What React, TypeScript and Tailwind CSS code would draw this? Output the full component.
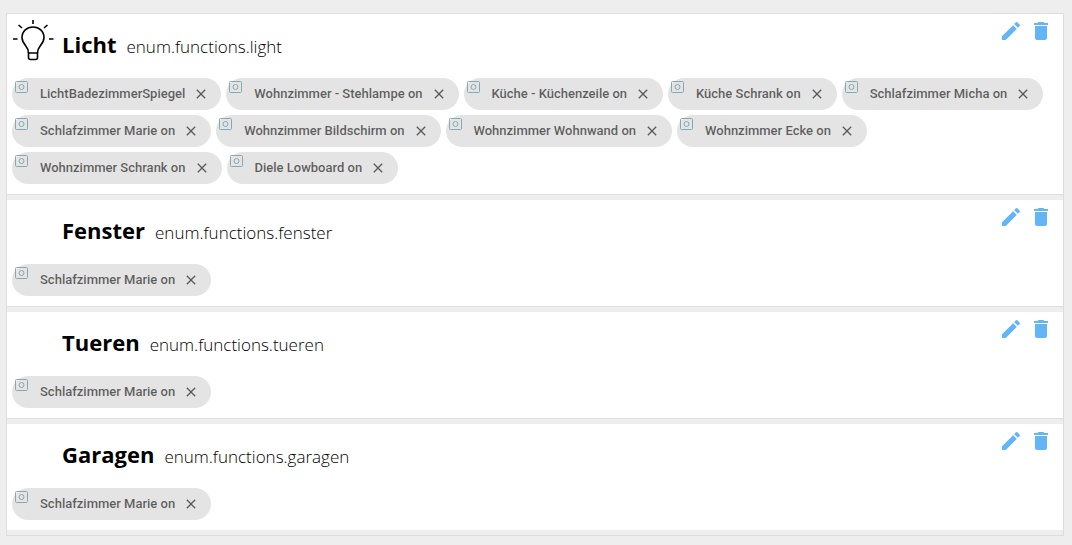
import { useState } from 'react';
import { MdClose, MdDelete, MdEdit } from 'react-icons/md';

interface EnumFunction {
  id: string;
  name: string;
  icon?: boolean;
  members: string[];
}

const initialFunctions: EnumFunction[] = [
  {
    id: 'enum.functions.light',
    name: 'Licht',
    icon: true,
    members: [
      'LichtBadezimmerSpiegel',
      'Wohnzimmer - Stehlampe on',
      'Küche - Küchenzeile on',
      'Küche Schrank on',
      'Schlafzimmer Micha on',
      'Schlafzimmer Marie on',
      'Wohnzimmer Bildschirm on',
      'Wohnzimmer Wohnwand on',
      'Wohnzimmer Ecke on',
      'Wohnzimmer Schrank on',
      'Diele Lowboard on',
    ],
  },
  { id: 'enum.functions.fenster', name: 'Fenster', members: ['Schlafzimmer Marie on'] },
  { id: 'enum.functions.tueren', name: 'Tueren', members: ['Schlafzimmer Marie on'] },
  { id: 'enum.functions.garagen', name: 'Garagen', members: ['Schlafzimmer Marie on'] },
];

function BulbIcon() {
  return (
    <svg className="w-[42px] h-[42px]" viewBox="0 0 42 42" fill="none" stroke="#000" strokeWidth={1.6} aria-hidden="true">
      <path d="M16.500 34c0-3-1-5-3-7.500-2-2.500-3.500-4.500-3.500-8C10 12 15 8 21 8s11 4 11 10.500c0 3.500-1.500 5.500-3.500 8-2 2.500-3 4.500-3 7.500" />
      <path d="M16.500 34h9v4.500q0 2-2 2h-5q-2 0-2-2z" />
      <path d="M21 1v4M1 20h4.500M37 20h4.500M6.500 6l3.500 3M35.500 6L32 9" />
    </svg>
  );
}

function StateIcon() {
  return (
    <svg className="absolute left-[3px] top-[3px] w-[13px] h-[12px]" viewBox="0 0 13 12" fill="none" stroke="#84a9b4" aria-hidden="true">
      <rect x="0.5" y="0.5" width="12" height="11" rx="1" />
      <circle cx="6.500" cy="6" r="2.500" />
    </svg>
  );
}

interface ChipProps {
  label: string;
  onRemove: () => void;
}

function Chip({ label, onRemove }: ChipProps) {
  return (
    <li className="relative flex items-center h-8 pl-7 pr-3 rounded-full bg-[#e4e4e4] font-['Roboto',sans-serif] text-[13px] font-medium text-black/60 whitespace-nowrap">
      <StateIcon />
      <span>{label}</span>
      <button type="button" onClick={onRemove} aria-label={`${label} entfernen`} className="ml-2 cursor-pointer">
        <MdClose className="w-4 h-4" />
      </button>
    </li>
  );
}

export default function App() {
  const [functions, setFunctions] = useState(initialFunctions);

  const removeFunction = (id: string) => {
    setFunctions(prev => prev.filter(fn => fn.id !== id));
  };

  const removeMember = (id: string, member: string) => {
    setFunctions(prev =>
      prev.map(fn => (fn.id === id ? { ...fn, members: fn.members.filter(m => m !== member) } : fn))
    );
  };

  return (
    <main className="min-h-screen bg-[#eeeeee] pl-1.5 pr-2 pt-[13px] font-['Open_Sans',sans-serif] text-black">
      <ul className="border border-[#dddddd]">
        {functions.map(fn => (
          <li key={fn.id} className="group">
            <section className="bg-white p-[5px] border-b border-[#dddddd] group-last:border-b-0">
              <header className="flex items-start h-[59px]">
                <div className="w-[50px] shrink-0">{fn.icon && <BulbIcon />}</div>
                <div className="flex items-baseline flex-1 gap-2.5 pt-[7px]">
                  <h2 className="text-[22px] leading-9 font-bold">{fn.name}</h2>
                  <span className="text-[17px] font-light">{fn.id}</span>
                </div>
                <div className="flex gap-1.5 mr-[5px] text-[#64b5f6]">
                  <button type="button" aria-label={`${fn.name} bearbeiten`} className="cursor-pointer">
                    <MdEdit className="w-6 h-6" />
                  </button>
                  <button
                    type="button"
                    aria-label={`${fn.name} löschen`}
                    onClick={() => removeFunction(fn.id)}
                    className="cursor-pointer"
                  >
                    <MdDelete className="w-6 h-6" />
                  </button>
                </div>
              </header>
              <ul className="flex flex-wrap gap-[5px] pb-[5px]">
                {fn.members.map(member => (
                  <Chip key={member} label={member} onRemove={() => removeMember(fn.id, member)} />
                ))}
              </ul>
            </section>
            <div className="h-[5px]" />
          </li>
        ))}
      </ul>
    </main>
  );
}
